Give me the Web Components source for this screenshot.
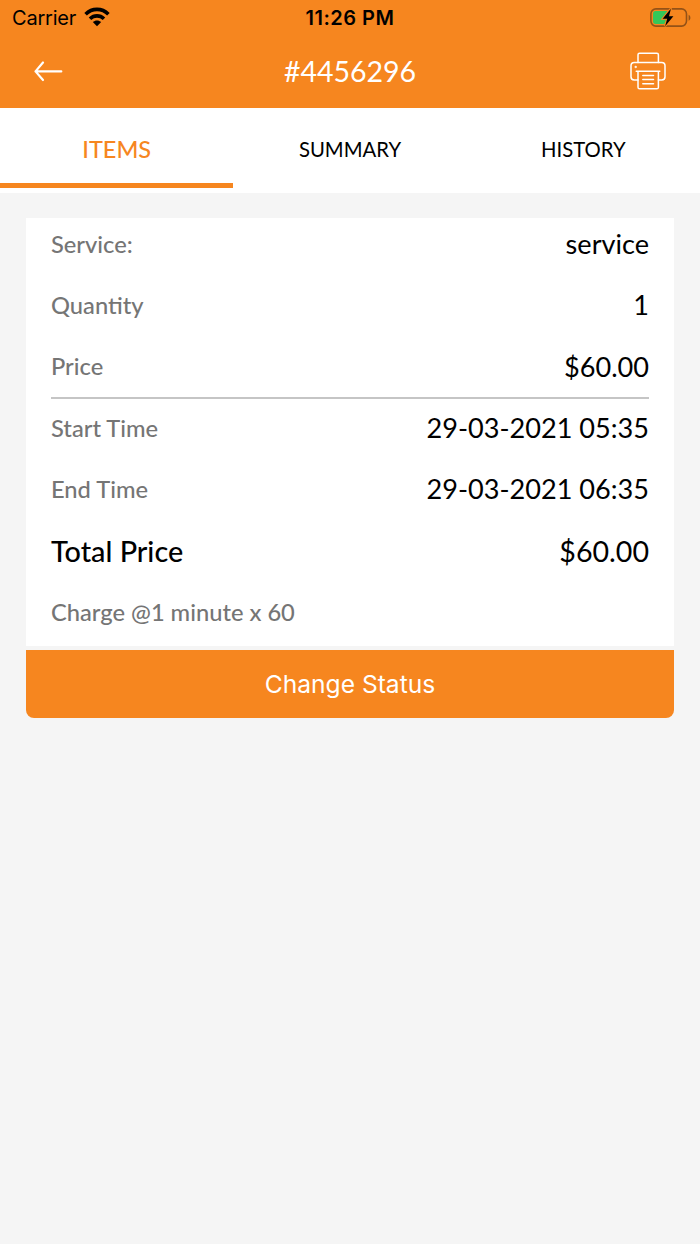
<!DOCTYPE html>
<html lang="en">
<head>
<meta charset="utf-8">
<meta name="viewport" content="width=device-width">
<title>Order #4456296</title>
<style>
html,body{margin:0;background:#f5f5f5}
body{font-family:Lato,"Liberation Sans",sans-serif;color:#000}
</style>
</head>
<body>
<order-screen>
  <status-bar slot="top"></status-bar>
  <nav-bar slot="top">#4456296</nav-bar>
  <tab-bar slot="tabs"><tab-item active>ITEMS</tab-item><tab-item>SUMMARY</tab-item><tab-item>HISTORY</tab-item></tab-bar>
  <item-card>
    <item-row label="Service:">service</item-row>
    <item-row label="Quantity">1</item-row>
    <item-row label="Price" divided>$60.00</item-row>
    <item-row label="Start Time">29-03-2021 05:35</item-row>
    <item-row label="End Time">29-03-2021 06:35</item-row>
    <item-row label="Total Price" total>$60.00</item-row>
    <item-row label="Charge @1 minute x 60"></item-row>
  </item-card>
  <action-button>Change Status</action-button>
</order-screen>
<script>
const define = (name, markup, init) => customElements.define(name, class extends HTMLElement {
  constructor() {
    super();
    const t = document.createElement('template');
    t.innerHTML = markup;
    this.attachShadow({ mode: 'open' }).append(t.content.cloneNode(true));
  }
  connectedCallback() { if (init) init(this); }
});

define('order-screen', `<style>
:host{display:flex;flex-direction:column;width:700px;height:1244px;background:#f5f5f5;overflow:hidden}
header{background:#f6861f;height:108px;display:flex;flex-direction:column;flex:none}
main{display:flex;flex-direction:column;gap:4px;padding:25px 26px}
</style><header><slot name="top"></slot></header><slot name="tabs"></slot><main><slot></slot></main>`);

define('status-bar', `<style>
:host{display:grid;grid-template-columns:1fr auto 1fr;align-items:center;height:35px;padding:0 10px 0 12px;font-family:Inter,sans-serif;font-size:20px;line-height:24px}
.l{display:flex;align-items:center;gap:8px;letter-spacing:-.2px}
.time{font-weight:600;letter-spacing:.5px;margin-left:-2px}
.r{justify-self:end;display:flex;margin-right:-2px}
svg{display:block}
.l svg{margin:-2px 0 0 0}
</style>
<div class="l"><span>Carrier</span><svg width="26" height="20" viewBox="0 0 26 20"><g fill="none" stroke="#000" stroke-width="3.6"><path d="M1.6 7.2C8 .8 18 .8 24.4 7.2"/><path d="M6 11.7C10 7.9 16 7.9 20 11.7"/></g><path d="M8.8 15.1C11.2 12.9 14.8 12.9 17.2 15.1L13 19.2Z"/></svg></div>
<span class="time">11:26 PM</span>
<div class="r"><svg width="42" height="22" viewBox="0 0 42 22"><rect x=".9" y="1.9" width="35.6" height="17.2" rx="5" fill="none" stroke="#945217" stroke-width="1.6"/><path d="M38.6 7.7C41 8.7 41 12.7 38.6 13.7Z" fill="#945217"/><path d="M5.7 4.1H17.5L12.5 12H16.7L14.3 17H5.7Q3 17 3 14.3V6.8Q3 4.1 5.7 4.1Z" fill="#34c759"/><path d="M20.4 2.2L12.6 11.8H17.2L15.1 19.2L23.4 9.2H19L20.8 2.2Z" fill="#000" stroke="#f6861f" stroke-width="2" paint-order="stroke"/></svg></div>`);

define('nav-bar', `<style>
:host{display:grid;grid-template-columns:1fr auto 1fr;align-items:center;height:72px;padding:0 34px;color:#fff;font-size:28.5px;font-weight:400;line-height:36px}
.p{justify-self:end}svg{display:block}
</style>
<svg width="29" height="22" viewBox="0 0 29 22" fill="none" stroke="#fff" stroke-width="2.2" stroke-linecap="round" stroke-linejoin="round"><path d="M9 2.5L1.5 11.4L9 20M1.5 11.4H27.3"/></svg>
<span><slot></slot></span>
<svg class="p" width="36" height="38" viewBox="0 0 36 38" fill="none" stroke="#fff" stroke-width="1.5" stroke-linecap="round" stroke-linejoin="round"><path d="M8 10.5V2.7Q8 1.2 9.5 1.2H26.9Q28.4 1.2 28.4 2.7V10.5"/><path d="M8 28H4.2Q1 28 1 24.8V13.7Q1 10.4 4.2 10.4H31.8Q35 10.4 35 13.7V24.8Q35 28 31.8 28H28.4"/><path d="M6.2 19.2H29.8M8 19.2V35.2Q8 36.8 9.6 36.8H26.8Q28.4 36.8 28.4 35.2V19.2M12.8 23.6H23.5M12.8 27.6H23.5M12.8 31.8H23.5"/><circle cx="5.7" cy="15" r=".4"/></svg>`);

define('tab-bar', `<style>
:host{display:grid;grid-template-columns:repeat(3,1fr);height:85px;background:#fff;flex:none}
</style><slot></slot>`);

define('tab-item', `<style>
:host{display:flex;flex-direction:column;height:80px;box-sizing:border-box;padding-top:1px;font-size:20.3px}
span{flex:1;display:flex;align-items:center;justify-content:center;padding-top:5px}
i{height:5px}
:host([active]){color:#f6861f;font-size:23.5px;font-weight:500}
:host([active]) i{background:#f6861f}
</style><span><slot></slot></span><i></i>`);

define('item-card', `<style>
:host{display:block;box-sizing:border-box;height:428px;padding:0 25px;background:#fff}
</style><slot></slot>`);

define('item-row', `<style>
:host{display:flex;flex-direction:column}
.row{display:flex;height:51px;margin-bottom:10.35px;align-items:center;justify-content:space-between}
.label{color:#757575;font-size:23.7px;font-weight:500}
.value{font-size:27.1px}
hr{display:none;height:1.5px;border:0;background:#c5c5c5;margin:-4.9px 0 3.4px}
:host([divided]) hr{display:block}
:host([total]) .label{color:#000;font-size:28.8px}
:host([total]) .value{font-size:28.6px}
:host([total]) .row{height:53px;margin-bottom:8.35px}
</style><div class="row"><span class="label"></span><span class="value"><slot></slot></span></div><hr>`,
el => { el.shadowRoot.querySelector('.label').textContent = el.getAttribute('label'); });

define('action-button', `<style>
:host{display:block}
button{display:block;width:100%;height:67.5px;border:0;border-radius:0 0 8px 8px;background:#f6861f;color:#fff;font:400 24.6px/30px Inter,sans-serif;padding:0}
</style><button type="button"><slot></slot></button>`);
</script>
</body>
</html>
